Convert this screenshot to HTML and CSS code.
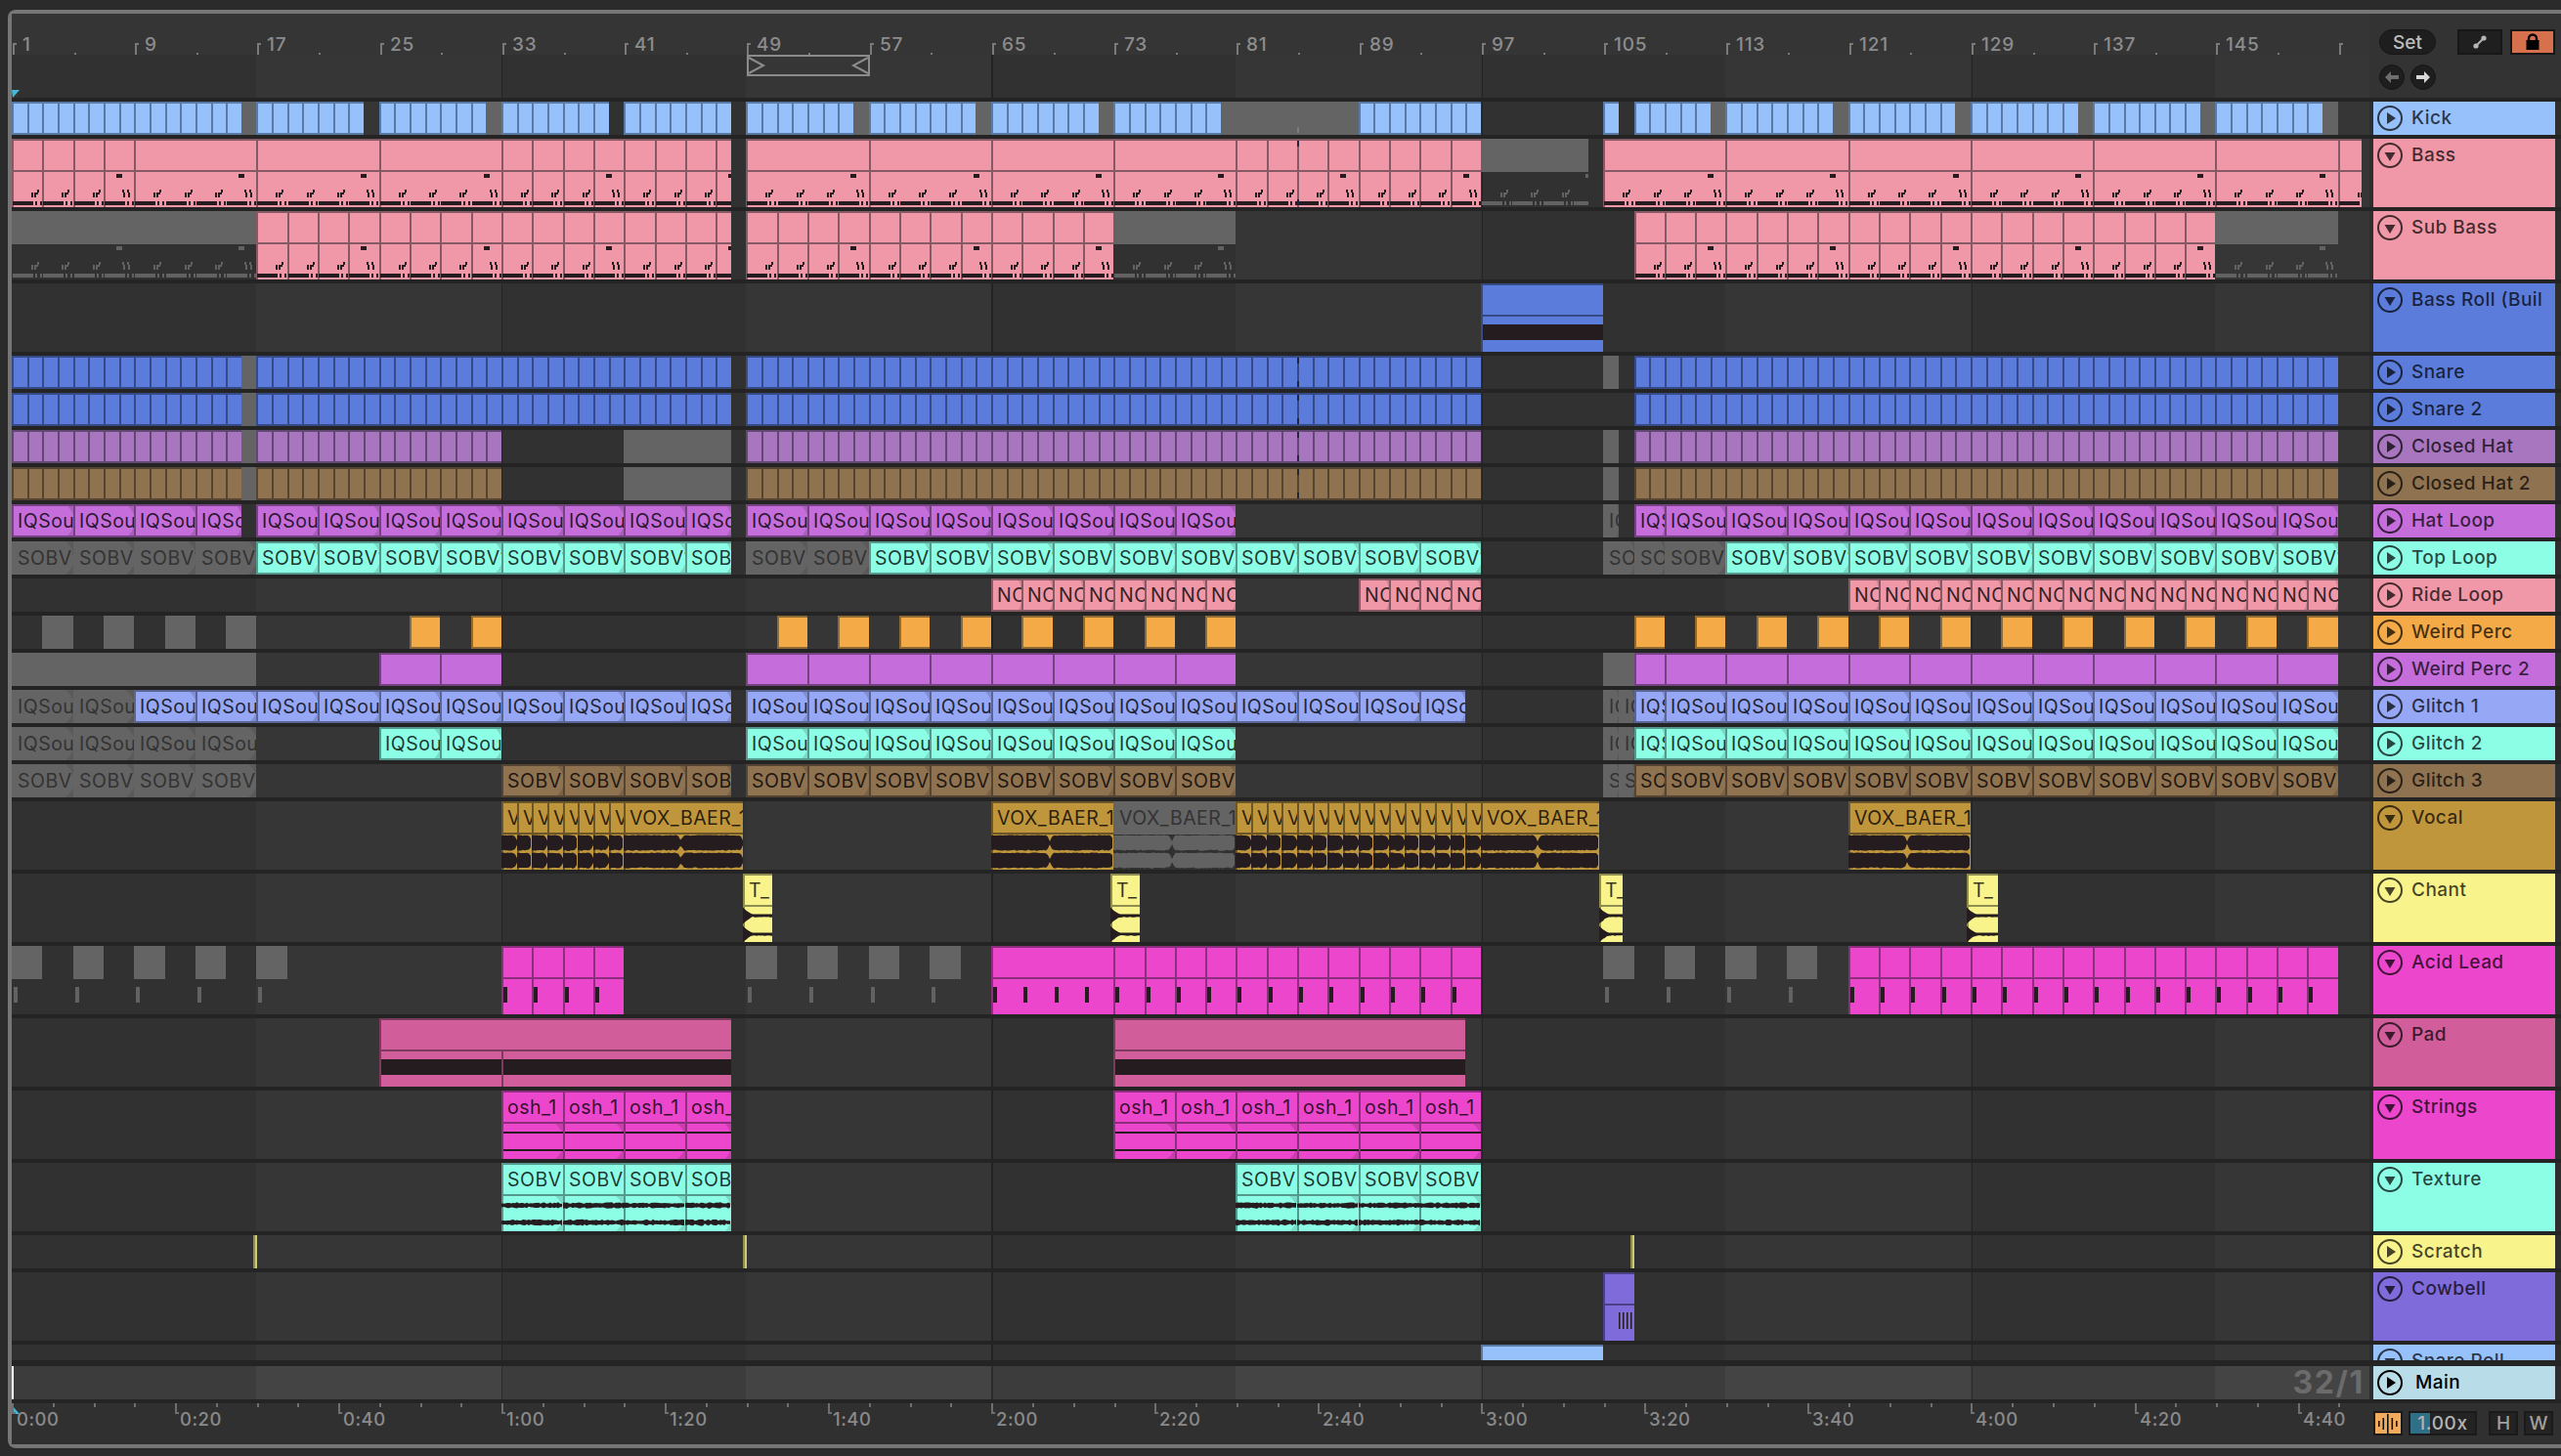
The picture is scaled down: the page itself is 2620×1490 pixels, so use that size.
FILE: index.html
```html
<!DOCTYPE html>
<html lang="en">
<head>
<meta charset="utf-8">
<title>Arrangement</title>
<link rel="stylesheet" href="styles.css">
</head>
<body>
<div class="frame">
  <div class="row header">
    <div class="lane ruler" id="ruler">
      <div class="ruler-top"></div>
      <svg class="loop" width="126" height="22" viewBox="0 0 126 22"><path d="M1 1h124v20H1z M2 3l15 8-15 8 M124 3l-15 8 15 8"/></svg>
      <svg class="start-flag" width="8" height="8" viewBox="0 0 8 8"><polygon points="0,0 8,0 1,8"/></svg>
    </div>
    <div class="side controls">
      <div class="control-row">
        <div class="pill">Set</div>
        <div class="square wide"><svg width="20" height="20" viewBox="0 0 20 20"><path class="expand-line" d="M6 14L14 6"/><circle class="expand-dot" cx="6" cy="14" r="2.6"/><circle class="expand-dot" cx="14" cy="6" r="2.6"/></svg></div>
        <div class="square wide lock"><svg width="18" height="20" viewBox="0 0 18 20"><path class="shackle" d="M5 9V6.5a4 4 0 0 1 8 0V9"/><rect x="2.5" y="8" width="13" height="10" fill="#000"/></svg></div>
      </div>
      <div class="control-row nav">
        <div class="round dim"><svg width="16" height="14" viewBox="0 0 16 14"><path d="M1 7l6-6v4h8v4H7v4z"/></svg></div>
        <div class="round"><svg width="16" height="14" viewBox="0 0 16 14"><path d="M15 7L9 1v4H1v4h8v4z"/></svg></div>
      </div>
    </div>
  </div>
  <div class="tracks" id="tracks"></div>
  <div class="row main">
    <div class="lane main-lane"><span class="meter">32/1</span></div>
    <div class="side">
      <div class="label label-main">
        <svg class="fold" width="26" height="26" viewBox="0 0 26 26"><circle cx="13" cy="13" r="12"/><polygon points="10,7 19,13 10,19"/></svg>
        <span>Main</span>
      </div>
    </div>
  </div>
  <div class="row timeline">
    <div class="lane time-lane" id="time">
      <svg class="time-flag" width="8" height="9" viewBox="0 0 8 9"><polygon points="0,0 8,9 0,9"/></svg>
    </div>
    <div class="side status">
      <div class="cpu"><svg width="22" height="20" viewBox="0 0 22 20"><path d="M1 7h1.6v6H1z M5.5 4h1.6v12H5.5z M10 0h1.6v20H10z M14.5 4h1.6v12h-1.6z M19 7h1.6v6H19z"/></svg></div>
      <div class="speed">1.00x</div>
      <div class="key">H</div>
      <div class="key">W</div>
    </div>
  </div>
</div>
<script src="script.js"></script>
</body>
</html>
```
FILE: styles.css
```css
* { box-sizing: border-box; }
html, body { margin: 0; width: 2620px; height: 1490px; overflow: hidden; background: #2b2b2b; }
body { padding: 10px 0 8px 8px; font-family: "Inter", "Liberation Sans", sans-serif; }

.frame { height: 1472px; border: 4px solid #767676; border-right: 0; border-radius: 8px 0 0 8px; background: #242424; display: flex; flex-direction: column; }
.row { display: flex; background: #2e2e2e; flex: none; }
.lane { position: relative; width: 2412px; flex: none; overflow: hidden;
  background-color: #313131;
  background-image:
    repeating-linear-gradient(90deg, transparent 0 500px, #232323 500px 501.3px),
    repeating-linear-gradient(90deg, transparent 0 250.5px, #363636 250.5px 501px);
  background-position: 1px 0, 0 0;
}
.side { flex: 1; padding-left: 4px; min-width: 0; }

/* header */
.header { height: 86px; }
.ruler-top { height: 42px; background: #353535; }
.tick { position: absolute; top: 30px; left: 0; width: 2px; height: 12px; background: #7a7a7a; }
.tick::before { content: ""; position: absolute; left: 0; top: 0; width: 4px; height: 2px; background: #7a7a7a; }
.dot { position: absolute; top: 40px; width: 2px; height: 2px; background: #7a7a7a; }
.bar-num { position: absolute; top: 22px; font-size: 19px; line-height: 20px; letter-spacing: .8px; color: #8c8c8c; font-weight: 500; }
.loop { position: absolute; left: 752px; top: 42px; }
.loop path { fill: none; stroke: #8b8b8b; stroke-width: 2; }
.start-flag { position: absolute; left: 0; bottom: 0; }
.start-flag polygon, .time-flag polygon { fill: #46b8d8; }

.controls { background: #333; padding: 16px 0 0 10px; display: flex; flex-direction: column; gap: 10px; }
.control-row { display: flex; gap: 8px; align-items: center; }
.pill { width: 58px; height: 26px; margin-right: 14px; border-radius: 13px; background: #1e1e1e; border: 1px solid #161616; color: #bdbdbd; font-size: 19px; font-weight: 500; display: flex; align-items: center; justify-content: center; }
.square { height: 26px; background: #1f1f1f; border: 2px solid #171717; display: flex; align-items: center; justify-content: center; }
.wide { width: 46px; }
.lock { background: #d7714d; }
.shackle { fill: none; stroke: #000; stroke-width: 2.4; }
.expand-line { stroke: #b5b5b5; stroke-width: 2; }
.expand-dot { fill: #b5b5b5; }
.nav { gap: 6px; }
.round { width: 26px; height: 26px; border-radius: 50%; background: #1e1e1e; border: 1px solid #161616; display: flex; align-items: center; justify-content: center; }
.round svg { fill: #d8d8d8; }
.round.dim svg { fill: #6e6e6e; }

/* tracks */
.tracks { height: 1292px; overflow: hidden; display: flex; flex-direction: column; gap: 4px; padding-top: 4px; flex: none; }
.short { height: 34px; }
.tall-row { height: 70px; }
.short .lane, .tall-row .lane { height: 100%; }

.label { height: 100%; width: 186px; background: var(--c); display: flex; gap: 9px; padding: 4px 0 0 4px; color: rgba(0, 0, 0, .72); font-size: 19px; font-weight: 500; line-height: 26px; letter-spacing: .45px; white-space: nowrap; overflow: hidden; }
.fold { flex: none; }
.fold circle { fill: none; stroke: currentColor; stroke-width: 2; }
.fold polygon { fill: currentColor; }
.label-main { --c: #b8dce8; color: #000; gap: 13px; }

.t-kick { --c: #97c1fb; --d: #5a7aa6; }
.t-bass { --c: #f198a8; --d: #855a64; }
.t-snare { --c: #5c7cdb; --d: #364a86; }
.t-ch { --c: #a876bf; --d: #614872; }
.t-ch2 { --c: #8f7250; --d: #544431; }
.t-hat { --c: #c56edb; --d: #74437f; }
.t-top { --c: #8dfee6; --d: #55998c; }
.t-weird { --c: #f3aa47; --d: #8e6a34; }
.t-g1 { --c: #96a7f5; --d: #5a6596; }
.t-vocal { --c: #c0963c; --d: #6b5629; }
.t-chant { --c: #f8f38a; --d: #8f8c52; }
.t-acid { --c: #ec47cc; --d: #8b2e7b; }
.t-pad { --c: #d15d9a; --d: #7c3a5e; }
.t-cow { --c: #7f6bd9; --d: #4c4185; }

.clip { position: absolute; top: 0; bottom: 0; overflow: hidden; background-color: var(--c); box-shadow: inset 2px 0 var(--d), inset 0 2px var(--d), inset 0 -2px var(--d); color: rgba(0, 0, 0, .8); font-size: 19.5px; letter-spacing: .5px; line-height: 35px; white-space: nowrap; }
.clip.muted { background-color: #646464; box-shadow: none; color: #333; }
.text { padding-left: 6px; }
.fade { background-image: radial-gradient(ellipse 60% 78% at 42% 50%, transparent 98%, rgba(0, 0, 0, .14) 100%); }
.clip.muted.fade { background-image: radial-gradient(ellipse 60% 78% at 42% 50%, transparent 98%, rgba(0, 0, 0, .1) 100%); }

.clip.tall { box-shadow: inset 2px 0 var(--d), inset 0 2px var(--d); }
.clip.tall.muted { box-shadow: none; background-color: transparent; }
.head { height: 34px; line-height: 35px; padding-left: 6px; border-bottom: 2px solid var(--d); }
.muted .head { border-bottom: 0; background: #646464; }
.ink { position: absolute; left: 0; top: 0; }
.ink path { fill: #241c1e; }
.muted .ink path { fill: #626262; }
.body.fade { height: 36px; }
.seam { position: absolute; top: 34px; bottom: 0; width: 2px; background: var(--d); }

.scratch { width: 4px; background: #cfcb72; box-shadow: inset 2px 0 var(--d); }
.mark { position: absolute; left: 1315px; width: 2px; height: 6px; background: #20263a; }
.mark.top { top: 2px; }
.mark.bottom { bottom: 2px; }
.mark.soft { background: #7b7b7b; }

/* main */
.main { height: 34px; margin-top: 6px; }
.main-lane { height: 100%; background-color: #3c3c3c; display: flex; justify-content: flex-end; align-items: center; padding-right: 5px;
  background-image:
    repeating-linear-gradient(90deg, transparent 0 500px, #2b2b2b 500px 501.3px),
    repeating-linear-gradient(90deg, transparent 0 250.5px, #444 250.5px 501px);
}
.main-lane::before { content: ""; position: absolute; left: 0; top: 0; bottom: 0; width: 2px; background: #fff; }
.meter { font-size: 32px; line-height: 34px; font-weight: 700; letter-spacing: 1.6px; color: #6b6b6b; }

/* time */
.timeline { height: 42px; margin-top: 4px; background: #303030; }
.time-lane { height: 100%; background: #303030; }
.minor { position: absolute; top: 0; width: 2px; height: 4px; background: #6f6f6f; }
.major { position: absolute; top: 0; width: 2px; height: 11px; background: #6f6f6f; }
.major::after { content: ""; position: absolute; left: 0; bottom: 0; width: 4px; height: 2px; background: #6f6f6f; }
.time-num { position: absolute; top: 6px; font-size: 18.5px; line-height: 20px; letter-spacing: .5px; color: #8a8a8a; font-weight: 500; }
.time-flag { position: absolute; left: 0; top: 2px; }

.status { display: flex; padding-top: 8px; }
.cpu { width: 30px; height: 25px; background: #f2ab5c; border: 2px solid #1a1a1a; display: flex; align-items: center; justify-content: center; }
.cpu svg { fill: #111; }
.speed { width: 70px; height: 25px; margin-left: 6px; border: 2px solid #1a1a1a; background: linear-gradient(90deg, #2f6f87 0 20px, #232323 20px); color: #b4b4b4; font-size: 19px; line-height: 21px; letter-spacing: .6px; text-align: center; font-weight: 500; }
.key { width: 30px; height: 25px; margin-left: 6px; background: #232323; border: 2px solid #1a1a1a; color: #a0a0a0; font-size: 19px; line-height: 22px; text-align: center; font-weight: 500; }
.speed + .key { margin-left: 12px; }
```
FILE: script.js
```js
(function () {
  var BAR = 15.656;
  function X(b) { return Math.round((b - 1) * BAR); }

  var seed = 7;
  function rnd() { seed = (seed * 16807) % 2147483647; return seed / 2147483647; }
  function rect(x, y, w, h) { return 'M' + x + ' ' + y + 'h' + w + 'v' + h + 'h' + (-w) + 'z'; }
  function steps(a, b, s) {
    var out = [];
    for (var i = a; i < b - 0.001; i += s) out.push([i, Math.min(i + s, b)]);
    return out;
  }
  function clip(cls, a, b, inner) {
    var l = X(a), r = X(b);
    return '<div class="clip ' + cls + '" style="left:' + l + 'px;width:' + (r - l) + 'px">' + (inner || '') + '</div>';
  }
  function ink(w, d) { return '<svg class="ink" width="' + w + '" height="70"><path d="' + d + '"/></svg>'; }
  function W(a, b) { return X(b) - X(a); }

  /* single-height clips */
  function P(a, b, s) { return steps(a, b, s || 1).map(function (c) { return clip('', c[0], c[1]); }).join(''); }
  function M(a, b) { return clip('muted', a, b); }
  function L(a, b, s, t) { return steps(a, b, s).map(function (c) { return clip('fade', c[0], c[1], '<div class="text">' + t + '</div>'); }).join(''); }
  function Lm(a, b, s, t) { return steps(a, b, s).map(function (c) { return clip('muted fade', c[0], c[1], '<div class="text">' + t + '</div>'); }).join(''); }

  /* two-part clips */
  function tall(a, b, text, d, opts) {
    opts = opts || {};
    var body = '<div class="body' + (opts.fade ? ' fade' : '') + '"></div>';
    return clip('tall' + (opts.muted ? ' muted' : ''), a, b, '<div class="head">' + (text || '') + '</div>' + body + (d ? ink(W(a, b), d) : '') + (opts.extra || ''));
  }

  /* Bass midi: eight-bar phrase anchored on bar 1 */
  function bassNotes(a, b) {
    var off = X(a), end = X(b), d = '';
    for (var k = 0; k < 80; k++) {
      var P0 = Math.round(k * 2 * BAR) - off;
      if (P0 > end - off || P0 < -40) continue;
      var last = k % 4 === 3;
      d += rect(P0 + 1, 64, 21, 4) + rect(P0 + 24, 64, 2, 4) + rect(P0 + 29, 64, 2, 4);
      if (last) {
        d += rect(P0 + 19, 52, 2, 3) + rect(P0 + 20, 55, 2, 5) + rect(P0 + 24, 52, 2, 3) + rect(P0 + 25, 55, 2, 5) + rect(P0 + 13, 36, 6, 4);
      } else {
        d += rect(P0 + 20, 55, 2, 5) + rect(P0 + 23, 55, 2, 5) + rect(P0 + 25, 55, 2, 2) + rect(P0 + 26, 52, 2, 3);
      }
    }
    return d;
  }
  function B(a, b, s) { return steps(a, b, s).map(function (c) { return tall(c[0], c[1], '', bassNotes(c[0], c[1])); }).join(''); }
  function Bm(a, b) { return tall(a, b, '', bassNotes(a, b), { muted: true }); }

  /* Waveforms */
  function wave(w, centers, half) {
    var d = '';
    centers.forEach(function (c) {
      var top = [], bot = [];
      for (var x = 0; x <= w; x += 2) {
        var h = half(x);
        top.push(x + ' ' + (c - h).toFixed(1));
        bot.unshift(x + ' ' + (c + h + rnd() * 0.8 - 0.4).toFixed(1));
      }
      d += 'M' + top.join('L') + 'L' + bot.join('L') + 'z';
    });
    return d;
  }
  function voxLong(w) {
    return wave(w, [42.5, 60.5], function (x) {
      var e = 7.3 + rnd() * 0.7;
      var near = Math.abs(x - w * 0.48);
      if (near < 3.5) e = Math.max(1.4, e * Math.sqrt(near / 3.5));
      if (x > w - 4) e *= Math.sqrt(Math.max(0.1, 1 - Math.pow((x - w + 4) / 4, 2)));
      return e;
    });
  }
  function voxShort(w) {
    return wave(w, [42.5, 60.5], function (x) {
      var e = 7.3 + rnd() * 0.7;
      if (x > w - 5) e *= Math.sqrt(Math.max(0.1, 1 - Math.pow((x - w + 5) / 5, 2)));
      return e;
    });
  }
  function V(a, b) { return steps(a, b, 1).map(function (c) { return tall(c[0], c[1], 'VOX_BAER', voxShort(W(c[0], c[1]))); }).join(''); }
  function VOX(a, b, m) { return tall(a, b, 'VOX_BAER_1', voxLong(W(a, b)), { muted: m }); }
  function T(a, b) {
    var w = W(a, b);
    var d = wave(w, [43, 62], function (x) { var f = Math.max(0, 1 - x / 15); return Math.max(1.5, 8 * f * f + 0.5); });
    return tall(a, b, 'T_', d);
  }
  function textureWave(w) { return wave(w, [43.5, 61], function () { return 1.6 + rnd() * 1.6; }); }
  function Tx(a, b) { return steps(a, b, 4).map(function (c) { return tall(c[0], c[1], 'SOBV2_', textureWave(W(c[0], c[1])), { fade: true }); }).join(''); }
  function Str(a, b) {
    return steps(a, b, 4).map(function (c) {
      var w = W(c[0], c[1]);
      return tall(c[0], c[1], 'osh_1', rect(2, 42, w, 2) + rect(2, 60, w, 2), { fade: true });
    }).join('');
  }

  /* Acid ticks, every two bars */
  function acidTicks(a, b) {
    var d = '', n = Math.round((b - a) / 2);
    for (var i = 0; i < n; i++) d += rect(Math.round(i * 2 * BAR) + 2, 42, 4, 16);
    return d;
  }
  function A(a, b, s) { return steps(a, b, s).map(function (c) { return tall(c[0], c[1], '', acidTicks(c[0], c[1])); }).join(''); }
  function Am(a) { return tall(a, a + 2, '', acidTicks(a, a + 2), { muted: true }); }

  function band(a, b, seamAt) {
    var extra = seamAt ? '<div class="seam" style="left:' + (X(seamAt) - X(a)) + 'px"></div>' : '';
    return tall(a, b, '', rect(2, 42, W(a, b), 16), { extra: extra });
  }
  function scratch(px) { return '<div class="clip scratch" style="left:' + px + 'px"></div>'; }
  function marks(top, bottom, soft) {
    return (top ? '<div class="mark top"></div>' : '') + (bottom ? '<div class="mark bottom' + (soft ? ' soft' : '') + '"></div>' : '');
  }
  function every(a, b, s, f) { return steps(a, b, s).map(function (c) { return f(c[0]); }).join(''); }

  var hi = 'IQSound_1', so = 'SOBV1_1', s2 = 'SOBV2_1', no = 'NOISE_1';

  function tail(text) { return Lm(105, 107, 1, text) + L(107, 109, 2, text) + L(109, 153, 4, text); }

  var tracks = [
    { n: 'Kick', c: 't-kick', clips: P(1, 16) + M(16, 17) + P(17, 24) + P(25, 32) + M(32, 33) + P(33, 40) + P(41, 48) + P(49, 56) + M(56, 57) + P(57, 64) + M(64, 65) + P(65, 72) + M(72, 73) + P(73, 80) + M(80, 89) + P(89, 97) + P(105, 106) + P(107, 112) + M(112, 113) + P(113, 120) + M(120, 121) + P(121, 128) + M(128, 129) + P(129, 136) + M(136, 137) + P(137, 144) + M(144, 145) + P(145, 152) + M(152, 153) + marks(false, true, true) },
    { n: 'Bass', c: 't-bass', tall: 1, clips: B(1, 9, 2) + B(9, 33, 8) + B(33, 48, 2) + B(49, 81, 8) + B(81, 97, 2) + Bm(97, 104) + B(105, 153, 8) + B(153, 154.55, 2) + marks(true, true) },
    { n: 'Sub Bass', c: 't-bass', tall: 1, clips: Bm(1, 17) + B(17, 48, 2) + B(49, 73, 2) + Bm(73, 81) + B(107, 145, 2) + Bm(145, 153) },
    { n: 'Bass Roll (Buil', c: 't-snare', tall: 1, clips: tall(97, 105, '', rect(2, 42, 130, 16)) },
    { n: 'Snare', c: 't-snare', clips: P(1, 16) + M(16, 17) + P(17, 48) + P(49, 97) + M(105, 106) + P(107, 153) + marks(true, true) },
    { n: 'Snare 2', c: 't-snare', clips: P(1, 16) + M(16, 17) + P(17, 48) + P(49, 97) + P(107, 153) + marks(true, true) },
    { n: 'Closed Hat', c: 't-ch', clips: P(1, 16) + M(16, 17) + P(17, 33) + M(41, 48) + P(49, 97) + M(105, 106) + P(107, 153) + marks(true, true) },
    { n: 'Closed Hat 2', c: 't-ch2', clips: P(1, 16) + M(16, 17) + P(17, 33) + M(41, 48) + P(49, 97) + M(105, 106) + P(107, 153) + marks(true, true) },
    { n: 'Hat Loop', c: 't-hat', clips: L(1, 16, 4, hi) + L(17, 48, 4, hi) + L(49, 81, 4, hi) + Lm(105, 106, 1, hi) + L(107, 109, 2, hi) + L(109, 153, 4, hi) },
    { n: 'Top Loop', c: 't-top', clips: Lm(1, 17, 4, so) + L(17, 48, 4, so) + Lm(49, 57, 4, so) + L(57, 97, 4, so) + Lm(105, 109, 2, so) + Lm(109, 113, 4, so) + L(113, 153, 4, so) },
    { n: 'Ride Loop', c: 't-bass', clips: L(65, 81, 2, no) + L(89, 97, 2, no) + L(121, 153, 2, no) },
    { n: 'Weird Perc', c: 't-weird', clips: every(3, 19, 4, function (b) { return M(b, b + 2); }) + P(27, 29, 2) + P(31, 33, 2) + every(51, 83, 4, function (b) { return P(b, b + 2, 2); }) + every(107, 155, 4, function (b) { return P(b, b + 2, 2); }) },
    { n: 'Weird Perc 2', c: 't-hat', clips: M(1, 17) + P(25, 33, 4) + P(49, 81, 4) + M(105, 107) + P(107, 109, 2) + P(109, 153, 4) },
    { n: 'Glitch 1', c: 't-g1', clips: Lm(1, 9, 4, hi) + L(9, 48, 4, hi) + L(49, 96, 4, hi) + tail(hi) },
    { n: 'Glitch 2', c: 't-top', clips: Lm(1, 17, 4, hi) + L(25, 33, 4, hi) + L(49, 81, 4, hi) + tail(hi) },
    { n: 'Glitch 3', c: 't-ch2', clips: Lm(1, 17, 4, s2) + L(33, 48, 4, s2) + L(49, 81, 4, s2) + tail(s2) },
    { n: 'Vocal', c: 't-vocal', tall: 1, clips: V(33, 41) + VOX(41, 48.75) + VOX(65, 73) + VOX(73, 81, true) + V(81, 97) + VOX(97, 104.75) + VOX(121, 129) },
    { n: 'Chant', c: 't-chant', tall: 1, clips: T(48.78, 50.7) + T(72.79, 74.71) + T(104.73, 106.26) + T(128.75, 130.8) },
    { n: 'Acid Lead', c: 't-acid', tall: 1, clips: every(1, 21, 4, Am) + A(33, 41, 2) + every(49, 65, 4, Am) + A(65, 73, 8) + A(73, 97, 2) + every(105, 121, 4, Am) + A(121, 153, 2) },
    { n: 'Pad', c: 't-pad', tall: 1, clips: band(25, 48, 33) + band(73, 96) },
    { n: 'Strings', c: 't-acid', tall: 1, clips: Str(33, 48) + Str(73, 97) },
    { n: 'Texture', c: 't-top', tall: 1, clips: Tx(33, 48) + Tx(81, 97) },
    { n: 'Scratch', c: 't-chant', clips: scratch(247) + scratch(748) + scratch(1656) },
    { n: 'Cowbell', c: 't-cow', tall: 1, clips: tall(105, 107, '', rect(16, 41, 1.5, 17) + rect(20, 41, 1.5, 17) + rect(24, 41, 1.5, 17) + rect(28, 41, 1.5, 17)) },
    { n: 'Snare Roll', c: 't-kick', tall: 1, clips: tall(97, 105) }
  ];

  document.getElementById('tracks').innerHTML = tracks.map(function (t) {
    var icon = t.tall ? '<polygon points="7.5,10 18.5,10 13,19"/>' : '<polygon points="10,7 19,13 10,19"/>';
    return '<div class="row ' + (t.tall ? 'tall-row' : 'short') + ' ' + t.c + '">' +
      '<div class="lane">' + t.clips + '</div>' +
      '<div class="side"><div class="label"><svg class="fold" width="26" height="26" viewBox="0 0 26 26"><circle cx="13" cy="13" r="12"/>' + icon + '</svg><span>' + t.n + '</span></div></div></div>';
  }).join('');

  var ruler = '';
  for (var b = 1; b <= 153; b += 4) {
    var x = X(b) + 1;
    if ((b - 1) % 8 === 0) {
      ruler += '<div class="tick" style="left:' + x + 'px"></div>';
      if (b < 153) ruler += '<div class="bar-num" style="left:' + (x + 10) + 'px">' + b + '</div>';
    } else {
      ruler += '<div class="dot" style="left:' + x + 'px"></div>';
    }
  }
  document.getElementById('ruler').insertAdjacentHTML('beforeend', ruler);

  var time = '';
  for (var k = 0; k * 41.76 < 2412; k++) {
    var tx = Math.round(k * 41.76);
    if (k % 4 === 0) {
      var sec = k * 5, label = Math.floor(sec / 60) + ':' + ('0' + (sec % 60)).slice(-2);
      time += '<div class="major" style="left:' + tx + 'px"></div><div class="time-num" style="left:' + (tx + 5) + 'px">' + label + '</div>';
    } else {
      time += '<div class="minor" style="left:' + tx + 'px"></div>';
    }
  }
  document.getElementById('time').insertAdjacentHTML('beforeend', time);
})();
```
